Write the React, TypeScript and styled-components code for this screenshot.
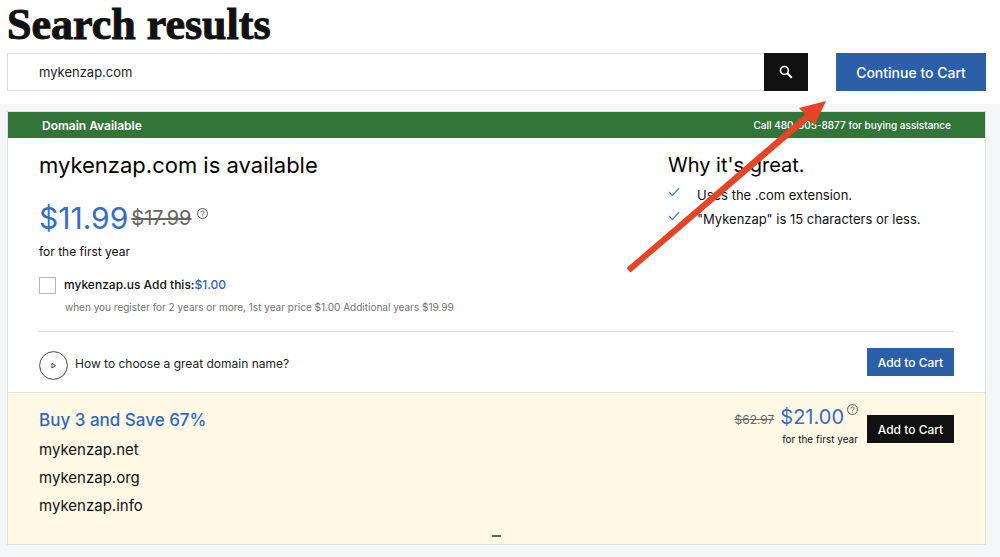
import React from "react";
import styled, { createGlobalStyle } from "styled-components";

const GlobalStyle = createGlobalStyle`
  *, *::before, *::after { box-sizing: border-box; }
  body { margin: 0; background: #f5f6f8; color: #111; font-family: Inter, "Liberation Sans", sans-serif; }
  h1, h2, h3, p, ul { margin: 0; padding: 0; }
  ul { list-style: none; }
  button, input { font-family: inherit; }
`;

const Page = styled.div`
  position: relative;
`;

const Header = styled.header`
  background: #fff;
  padding: 0 14px 13px 7px;
`;

const PageTitle = styled.h1`
  padding-bottom: 4px;
  font-family: "Liberation Serif", serif;
  font-size: 44px;
  font-weight: 700;
  line-height: 49px;
  -webkit-text-stroke: 1px #111;
`;

const SearchRow = styled.div`
  display: flex;
  gap: 28px;
  height: 38px;
`;

const SearchForm = styled.form`
  display: flex;
  flex: 1;
`;

const SearchInput = styled.input`
  flex: 1;
  min-width: 0;
  padding: 0 31px;
  border: 1px solid #dcdcdc;
  border-right: 0;
  border-radius: 0;
  background: #fff;
  color: #222;
  font-size: 13px;
  outline: none;
`;

const SearchButton = styled.button`
  display: flex;
  align-items: center;
  justify-content: center;
  width: 44px;
  padding: 0;
  border: 0;
  background: #111;
`;

const SolidButton = styled.button<{ $tone: "blue" | "black"; $large?: boolean }>`
  flex: none;
  width: ${(p) => (p.$large ? 150 : 87)}px;
  height: ${(p) => (p.$large ? 38 : 28)}px;
  padding: 0;
  border: 0;
  background: ${(p) => (p.$tone === "blue" ? "#2b5fa8" : "#111")};
  color: #fff;
  font-size: ${(p) => (p.$large ? 14 : 12)}px;
  font-weight: 500;
  white-space: nowrap;
`;

const Results = styled.main`
  padding: 7px 14px 12px 7px;
`;

const Card = styled.section`
  border: 1px solid #dfe1e2;
  background: #fff;
`;

const Banner = styled.div`
  display: flex;
  align-items: center;
  justify-content: space-between;
  height: 26px;
  padding: 0 34px;
  background: #327539;
  color: #fff;
`;

const BannerTitle = styled.strong`
  font-size: 12px;
  font-weight: 600;
`;

const BannerNote = styled.span`
  font-size: 10px;
  font-weight: 500;
`;

const Details = styled.div`
  display: flex;
  justify-content: space-between;
  margin: 0 31px;
  padding-top: 12px;
  height: 194px;
  border-bottom: 1px solid #d9dadb;
`;

const Heading = styled.h2<{ $small?: boolean }>`
  color: #000;
  font-size: ${(p) => (p.$small ? 20 : 22)}px;
  font-weight: 400;
  line-height: 30px;
`;

const Reasons = styled.div`
  width: 286px;
`;

const Reason = styled.li`
  display: flex;
  align-items: flex-start;
  gap: 17px;
  color: #111;
  font-size: 13px;
  line-height: 24px;
  white-space: nowrap;

  svg { flex: none; margin-top: 4px; }
`;

const ReasonList = styled.ul`
  padding-top: 3px;
`;

const PriceRow = styled.div`
  display: flex;
  align-items: center;
  gap: 5px;
  height: 40px;
  margin-top: 18px;

  svg { align-self: flex-start; margin-top: 10px; }
`;

const Price = styled.span`
  color: #366dc6;
  font-size: 30px;
  line-height: 40px;
`;

const OldPrice = styled.s`
  margin-left: -2px;
  color: #666;
  font-size: 20px;
`;

const Term = styled.p`
  font-size: 12px;
  line-height: 18px;
  margin-top: 5px;
`;

const AddOn = styled.label`
  display: flex;
  align-items: center;
  gap: 8px;
  margin-top: 15px;
  font-size: 12px;
  font-weight: 500;
  line-height: 18px;
`;

const Checkbox = styled.input`
  appearance: none;
  width: 17px;
  height: 17px;
  margin: 0;
  border: 1px solid #aeb8bf;
  background: #fff;
`;

const Accent = styled.span`
  color: #2b62bd;
`;

const FinePrint = styled.p`
  margin-top: 5px;
  padding-left: 26px;
  color: #717171;
  font-size: 10px;
  line-height: 16px;
`;

const HelpRow = styled.div`
  display: flex;
  align-items: center;
  justify-content: space-between;
  height: 60px;
  padding: 0 31px;
`;

const HelpLink = styled.a`
  display: flex;
  align-items: center;
  gap: 7px;
  padding-top: 6px;
  color: #222;
  font-size: 12px;
  text-decoration: none;

  span { padding-bottom: 3px; }
`;

const Bundle = styled.div`
  position: relative;
  display: flex;
  justify-content: space-between;
  height: 152px;
  padding: 11px 31px 0;
  border-top: 1px solid #dfe1e2;
  background: #fff8e5;
`;

const BundleTitle = styled.h3`
  color: #3068bd;
  font-size: 17px;
  font-weight: 500;
  line-height: 32px;
`;

const BundleItem = styled.li`
  color: #111;
  font-size: 15px;
  line-height: 28px;
`;

const BundleOffer = styled.div`
  display: flex;
  align-items: flex-start;
  gap: 9px;
  padding-top: 11px;
`;

const BundlePrice = styled.div`
  display: flex;
  flex-direction: column;
  align-items: flex-end;
  margin-top: -12px;
`;

const BundleAmount = styled.div`
  display: flex;
  align-items: center;
  gap: 6px;
  height: 28px;
  color: #366dc6;
  font-size: 20px;

  s { color: #666; font-size: 12px; padding-top: 4px; }
  svg { align-self: flex-start; margin-top: 1px; margin-left: -3px; }
`;

const BundleTerm = styled.span`
  font-size: 10px;
  line-height: 16px;
`;

const Collapse = styled.button`
  position: absolute;
  bottom: 0;
  left: 50%;
  width: 25px;
  height: 16px;
  margin-left: -13px;
  padding: 0 8px;
  border: 0;
  background: none;

  &::before { content: ""; display: block; height: 2px; background: #66645c; }
`;

const Arrow = styled.svg`
  position: absolute;
  top: 100px;
  right: 172px;
  pointer-events: none;
`;

const QuestionIcon = () => (
  <svg width="11" height="11" viewBox="0 0 20 20" fill="none" stroke="#555" strokeWidth="1.8" aria-hidden="true">
    <circle cx="10" cy="10" r="9" />
    <path d="M7.2 8.2c0-1.8 1.2-2.9 2.9-2.9s2.8 1 2.8 2.4c0 1.9-2.8 2-2.8 4.2M10.1 13.6v1.6" />
  </svg>
);

const CheckIcon = () => (
  <svg width="12" height="10" viewBox="0 0 12 10" fill="none" stroke="#3a74d0" strokeWidth="1.1" aria-hidden="true">
    <path d="M1 5l3.4 3.4L11 1.3" />
  </svg>
);

const SearchIcon = () => (
  <svg width="14" height="14" viewBox="0 0 14 14" fill="none" stroke="#fff" aria-hidden="true">
    <circle cx="5.4" cy="5.4" r="3.9" strokeWidth="1.6" />
    <path d="M8.3 8.3l4.4 4.4" strokeWidth="2" />
  </svg>
);

const PlayIcon = () => (
  <svg width="29" height="29" viewBox="0 0 29 29" fill="none" stroke="#333" aria-hidden="true">
    <circle cx="14.5" cy="14.5" r="13.9" strokeWidth="0.9" />
    <path d="M13 12.2v4.8l3.6-2.4z" strokeWidth="0.9" />
  </svg>
);

const bundleDomains = ["mykenzap.net", "mykenzap.org", "mykenzap.info"];
const reasons = ["Uses the .com extension.", '"Mykenzap" is 15 characters or less.'];

export default function App() {
  return (
    <>
      <GlobalStyle />
      <Page>
        <Header>
          <PageTitle>Search results</PageTitle>
          <SearchRow>
            <SearchForm onSubmit={(e) => e.preventDefault()}>
              <SearchInput type="text" aria-label="Domain name" defaultValue="mykenzap.com" />
              <SearchButton type="submit" aria-label="Search">
                <SearchIcon />
              </SearchButton>
            </SearchForm>
            <SolidButton $tone="blue" $large>Continue to Cart</SolidButton>
          </SearchRow>
        </Header>
        <Results>
          <Card>
            <Banner>
              <BannerTitle>Domain Available</BannerTitle>
              <BannerNote>Call 480-505-8877 for buying assistance</BannerNote>
            </Banner>
            <Details>
              <div>
                <Heading>mykenzap.com is available</Heading>
                <PriceRow>
                  <Price>$11.99</Price>
                  <OldPrice>$17.99</OldPrice>
                  <QuestionIcon />
                </PriceRow>
                <Term>for the first year</Term>
                <AddOn>
                  <Checkbox type="checkbox" />
                  <span>mykenzap.us Add this:<Accent>$1.00</Accent></span>
                </AddOn>
                <FinePrint>when you register for 2 years or more, 1st year price $1.00 Additional years $19.99</FinePrint>
              </div>
              <Reasons>
                <Heading $small>Why it's great.</Heading>
                <ReasonList>
                  {reasons.map((text) => (
                    <Reason key={text}><CheckIcon />{text}</Reason>
                  ))}
                </ReasonList>
              </Reasons>
            </Details>
            <HelpRow>
              <HelpLink href="#help"><PlayIcon /><span>How to choose a great domain name?</span></HelpLink>
              <SolidButton $tone="blue">Add to Cart</SolidButton>
            </HelpRow>
            <Bundle>
              <div>
                <BundleTitle>Buy 3 and Save 67%</BundleTitle>
                <ul>
                  {bundleDomains.map((name) => (
                    <BundleItem key={name}>{name}</BundleItem>
                  ))}
                </ul>
              </div>
              <BundleOffer>
                <BundlePrice>
                  <BundleAmount><s>$62.97</s><span>$21.00</span><QuestionIcon /></BundleAmount>
                  <BundleTerm>for the first year</BundleTerm>
                </BundlePrice>
                <SolidButton $tone="black">Add to Cart</SolidButton>
              </BundleOffer>
              <Collapse aria-label="Collapse offer" />
            </Bundle>
          </Card>
        </Results>
        <Arrow width="202" height="173" viewBox="626 100 202 173" fill="#e64427" aria-hidden="true">
          <path d="M826 101L799 108L805 114.5L626.5 268L630.5 272.5L809.5 119.5L814.5 125.5z" />
        </Arrow>
      </Page>
    </>
  );
}
